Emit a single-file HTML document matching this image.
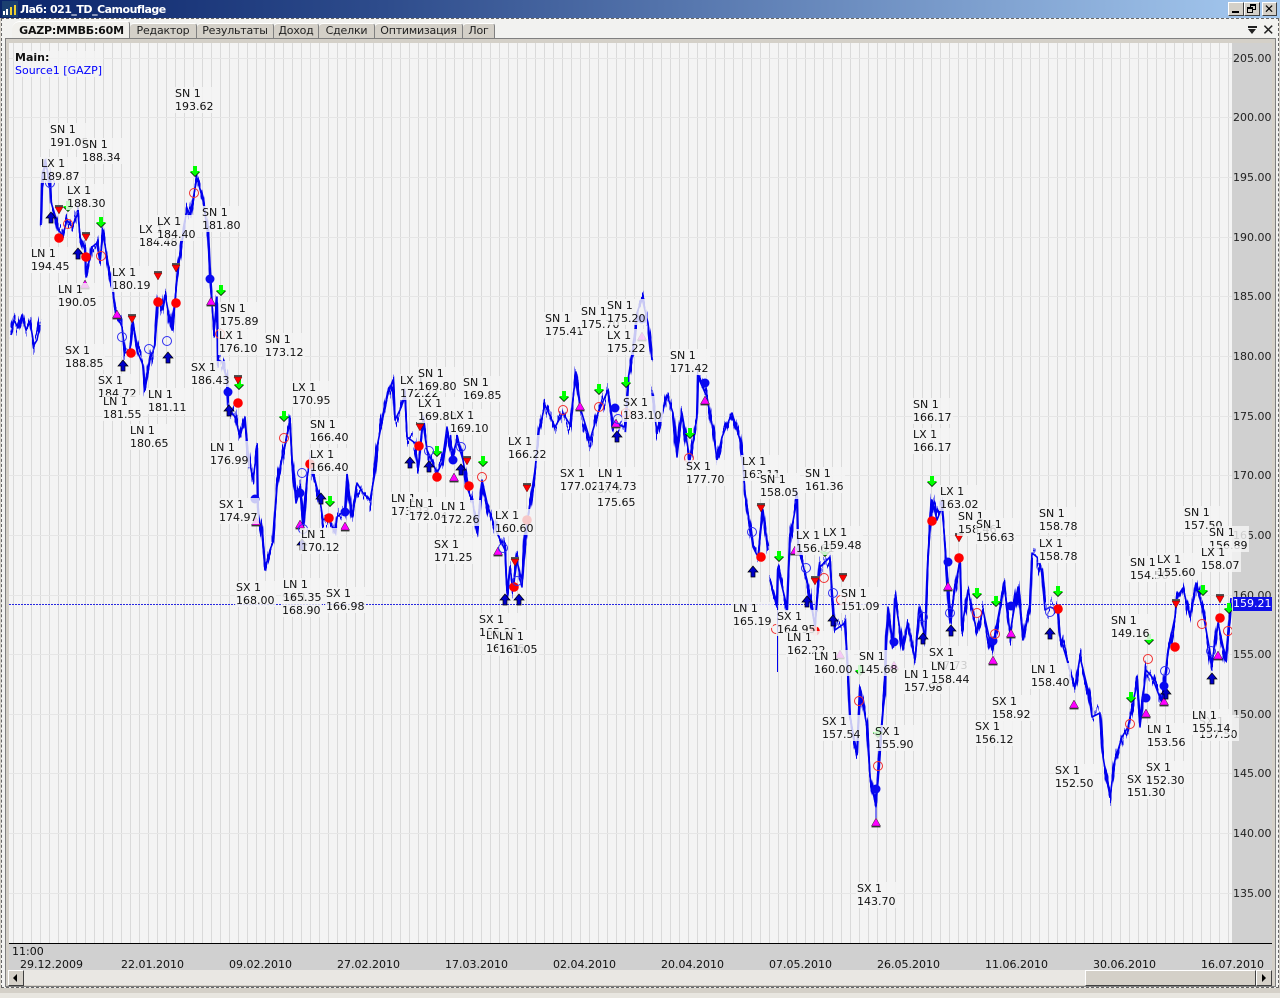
<!DOCTYPE html>
<html><head><meta charset="utf-8"><title>Лаб: 021_TD_Camouflage</title>
<style>
html,body{margin:0;padding:0;width:1280px;height:998px;overflow:hidden;background:#e8e6e0;font:11px/13px "DejaVu Sans","Liberation Sans",sans-serif;color:#111}
div,b,i,span{position:absolute;display:block;font-style:normal}
.l{background:rgba(244,244,244,.82);white-space:nowrap;color:#111;padding:0 1px;margin-left:-1px;transform:translateY(1px)}
.p{left:1233px;color:#222;font-size:11px;white-space:nowrap;transform:translateY(1px)}
.d{top:958px;white-space:nowrap;color:#111}
.t{top:23px;height:14px;background:#d4d0c8;border-top:1px solid #fff;border-right:1px solid #808080;border-bottom:1px solid #808080;text-align:center;line-height:14px;color:#222;border-radius:4px 3px 0 0;white-space:nowrap;letter-spacing:-.2px}
.wb{top:2px;height:14px;background:#d4d0c8;border:1px solid;border-color:#fff #404040 #404040 #fff;box-sizing:border-box}
svg{position:absolute;left:0;top:0}
</style></head><body>

<div style="left:0;top:0;width:1280px;height:18px;background:linear-gradient(90deg,#0a246a 0%,#2e4c8c 30%,#a6caf0 100%)"></div>
<div style="left:2px;top:1px;width:16px;height:16px;background:#1b3f70"></div>
<div style="left:3px;top:11px;width:2px;height:4px;background:#fff"></div>
<div style="left:6px;top:9px;width:2px;height:6px;background:#fff"></div>
<div style="left:10px;top:7px;width:2px;height:8px;background:#f0d030"></div>
<div style="left:14px;top:5px;width:2px;height:10px;background:#f0d030"></div>
<span style="left:20px;top:3px;color:#fff;font:bold 11px/13px 'DejaVu Sans',sans-serif;letter-spacing:-.5px">Лаб: 021_TD_Camouflage</span>
<div class="wb" style="left:1228px;width:16px"></div><div style="left:1232px;top:11px;width:7px;height:2px;background:#000"></div>
<div class="wb" style="left:1244px;width:16px"></div><div style="left:1250px;top:4px;width:6px;height:6px;border:1px solid #000;border-top-width:2px;box-sizing:border-box;"></div><div style="left:1247px;top:7px;width:6px;height:6px;border:1px solid #000;border-top-width:2px;box-sizing:border-box;background:#d4d0c8"></div>
<div class="wb" style="left:1262px;width:15px"></div><span style="left:1264px;top:2px;font:bold 12px/14px 'DejaVu Sans',sans-serif;color:#000">✕</span>

<div style="left:0;top:18px;width:1280px;height:975px;background:#d4d0c8"></div>
<div style="left:1px;top:18px;width:1278px;height:970px;border:1px dashed #666;box-sizing:border-box;background:#f2f2f0"></div>

<div class="t" style="left:12px;top:21px;height:17px;background:#f1f0ec;font-weight:bold;color:#111;line-height:17px;border-radius:8px 3px 0 0;letter-spacing:-.2px;text-indent:2px;width:117px">GAZP:ММВБ:60М</div>
<div class="t" style="left:130px;width:66px">Редактор</div>
<div class="t" style="left:197px;width:76px">Результаты</div>
<div class="t" style="left:274px;width:44px">Доход</div>
<div class="t" style="left:319px;width:55px">Сделки</div>
<div class="t" style="left:375px;width:87px">Оптимизация</div>
<div class="t" style="left:463px;width:31px">Лог</div>

<div style="left:1248px;top:26px;width:9px;height:2px;background:#222"></div>
<div style="left:1248px;top:29px;width:0;height:0;border:4.5px solid transparent;border-top:5px solid #222;border-bottom:0"></div>
<span style="left:1262px;top:22px;font:15px/16px 'DejaVu Sans',sans-serif;color:#222">✕</span>

<div style="left:5px;top:38px;width:1271px;height:949px;border:1px solid #808080;box-sizing:border-box;background:#d4d0c8"></div>
<div style="left:9px;top:43px;width:1263px;height:927px;background:#d0d0d0"></div>

<svg width="1280" height="998" viewBox="0 0 1280 998">
<defs>
<pattern id="vg" x="13" y="0" width="9" height="10" patternUnits="userSpaceOnUse"><rect width="1" height="10" fill="#dadada"/></pattern>
<filter id="n" filterUnits="userSpaceOnUse" x="0" y="0" width="1280" height="998" color-interpolation-filters="sRGB">
<feTurbulence type="fractalNoise" baseFrequency="0.4 0.001" numOctaves="3" seed="4" result="t"/>
<feColorMatrix in="t" type="matrix" values="0 0 0 0 .5  0 1 0 0 0  0 0 0 0 0  0 0 0 0 1" result="m"/>
<feDisplacementMap in="SourceGraphic" in2="m" scale="34" xChannelSelector="R" yChannelSelector="G"/>
</filter>
<g id="pl">
<path d="M11 335L14 320 18 328 22 315 26 330 30 322 34 345 37 340 40 325"/>
<path d="M41 225L42 183 45 160 50 182 51 202 55 215 58 230 63 235 67 220 72 227 78 213 80 237 85 250 86 277 92 247 97 243 100 263 103 233 108 263 113 293 115 310 122 327 125 353 130 350 133 323 138 353 143 365 145 390 150 360 155 345 158 300 162 310 165 295 172 330 178 270 182 240 187 208 190 215 197 178 203 200 208 233 210 279 214 330 217 297 218 360 222 362 227 380 228 407 235 417 240 437 245 417 248 453 253 480 257 450 258 513 262 533 265 570 270 550 273 542 277 487 283 453 290 423 292 460 296 503 300 490 303 527 307 477 310 463 315 480 320 500 323 520 328 517 335 533 337 517 345 510 347 473 352 517 357 483 363 493 370 500 375 473 377 447 383 417 388 393 393 380 395 420 400 410 405 397 407 437 415 443 418 470 423 423 427 450 437 473 442 463 447 427 452 457 457 440 463 460 468 490 473 503 477 533 482 480 488 507 497 533 505 550 507 593 510 567 513 590 517 560 522 587 525 537 530 503 535 470 539 430 545 405 555 427 563 413 570 425 576 372 580 407 590 440 598 413 608 390 613 423 625 427 628 380 633 347 637 313 642 298 648 323 652 360"/>
<path d="M652 393L657 433 667 395 673 413 677 457 682 413 690 460 697 417 698 377 707 397 713 430 717 460 722 437 732 413 740 440 743 467 745 493 753 547 758 557 763 510 768 550"/>
<path d="M770 580L777 607 778 570 787 607 790 537 797 500 798 547 807 580 815 627 820 567 830 557 832 593 835 630 845 623 848 677 850 717 857 753 860 687 867 727 870 777 876 807 880 750 885 687 886 640 888 607 893 647 895 598 903 650 908 623 915 660 920 607 925 640 928 560 932 500 937 520 942 507 945 543 950 623 955 587 960 560 962 627 968 590 977 633 983 610 992 650 1000 607 1004 582 1010 633 1018 587 1023 640 1030 603 1032 553 1037 557 1042 573 1045 610 1050 607 1058 610 1060 637 1065 653 1075 687 1080 657 1088 690 1092 717 1100 713 1103 757 1110 797 1115 760 1122 737 1128 727 1137 683 1140 727 1146 670 1152 677 1162 703 1168 650 1175 617 1177 597 1183 588 1190 617 1196 583 1202 607 1212 663 1218 623 1226 660 1231 598"/>
</g>
<g id="ga"><polygon points="-2,-4 2,-4 2,1 5,1 0,6 -5,1 -2,1" fill="#000"/><polygon points="-2,-5 2,-5 2,0 5,0 0,5 -5,0 -2,0" fill="#0f0"/></g>
<g id="rd"><rect x="-4" y="-5" width="8" height="2" fill="#555"/><polygon points="-4,-3 4,-3 0,4" fill="#f00" stroke="#400" stroke-width=".4"/></g>
<g id="mu"><polygon points="0,-5 -4.5,3 4.5,3" fill="#f0f" stroke="#222" stroke-width=".5"/><rect x="-4.5" y="3" width="9" height="1.4" fill="#333"/></g>
<g id="na"><polygon points="0,-6 -5,0 -2,0 -2,5 2,5 2,0 5,0" fill="#0000c8" stroke="#000" stroke-width=".7"/></g>
<circle id="rf" r="4.8" fill="#f00"/>
<circle id="bf" r="4.5" fill="#0a0af0"/>
<circle id="ro" r="4.5" fill="none" stroke="#f03030" stroke-width="1"/>
<circle id="bo" r="4.5" fill="none" stroke="#3030f0" stroke-width="1"/>
</defs>
<rect x="9" y="43" width="1223" height="900" fill="#f4f4f4"/>
<rect x="9" y="43" width="1223" height="900" fill="url(#vg)"/>
<g stroke="#e6e6e6" stroke-width="1">
<path d="M9 58.5H1232M9 117.5H1232M9 177.5H1232M9 237.5H1232M9 296.5H1232M9 356.5H1232M9 416.5H1232M9 475.5H1232M9 535.5H1232M9 595.5H1232M9 654.5H1232M9 714.5H1232M9 773.5H1232M9 833.5H1232M9 893.5H1232"/>
</g>
<path d="M9 604.5H1232" stroke="#2828e0" stroke-width="1" stroke-dasharray="2 1"/>
<path d="M9 943.5H1272" stroke="#000"/>

<use href="#pl" fill="none" stroke="#0000ee" stroke-width="1.6" stroke-linejoin="round"/>
<g filter="url(#n)"><use href="#pl" fill="none" stroke="#0000ee" stroke-width="2.4" stroke-linejoin="round"/></g>
<path d="M777.5 607V672M876 790V820" stroke="#0000ee" stroke-width="1"/>

<g>
<use href="#ga" x="101" y="222"/><use href="#ga" x="195" y="171"/><use href="#ga" x="221" y="290"/><use href="#ga" x="239" y="384"/><use href="#ga" x="284" y="416"/><use href="#ga" x="330" y="501"/><use href="#ga" x="437" y="451"/><use href="#ga" x="483" y="461"/><use href="#ga" x="564" y="396"/><use href="#ga" x="599" y="389"/><use href="#ga" x="626" y="382"/><use href="#ga" x="690" y="433"/><use href="#ga" x="779" y="556"/><use href="#ga" x="825" y="551"/><use href="#ga" x="932" y="481"/><use href="#ga" x="977" y="593"/><use href="#ga" x="996" y="601"/><use href="#ga" x="1058" y="591"/><use href="#ga" x="1131" y="697"/><use href="#ga" x="1149" y="639"/><use href="#ga" x="1203" y="590"/><use href="#ga" x="1229" y="608"/><use href="#ga" x="68" y="206"/><use href="#ga" x="860" y="670"/><use href="#ga" x="878" y="732"/>
<use href="#rd" x="59" y="210"/><use href="#rd" x="86" y="237"/><use href="#rd" x="132" y="319"/><use href="#rd" x="158" y="276"/><use href="#rd" x="176" y="268"/><use href="#rd" x="238" y="380"/><use href="#rd" x="420" y="427"/><use href="#rd" x="467" y="461"/><use href="#rd" x="527" y="488"/><use href="#rd" x="515" y="562"/><use href="#rd" x="761" y="508"/><use href="#rd" x="815" y="581"/><use href="#rd" x="843" y="578"/><use href="#rd" x="959" y="538"/><use href="#rd" x="1176" y="604"/><use href="#rd" x="1220" y="599"/>
<use href="#mu" x="117" y="315"/><use href="#mu" x="85" y="285"/><use href="#mu" x="211" y="302"/><use href="#mu" x="256" y="522"/><use href="#mu" x="300" y="525"/><use href="#mu" x="345" y="527"/><use href="#mu" x="454" y="478"/><use href="#mu" x="498" y="552"/><use href="#mu" x="580" y="407"/><use href="#mu" x="616" y="424"/><use href="#mu" x="642" y="337"/><use href="#mu" x="705" y="401"/><use href="#mu" x="795" y="551"/><use href="#mu" x="894" y="666"/><use href="#mu" x="876" y="823"/><use href="#mu" x="948" y="587"/><use href="#mu" x="993" y="661"/><use href="#mu" x="1011" y="634"/><use href="#mu" x="1074" y="705"/><use href="#mu" x="1146" y="714"/><use href="#mu" x="1164" y="702"/><use href="#mu" x="1218" y="656"/><use href="#mu" x="840" y="655"/>
<use href="#na" x="51" y="218"/><use href="#na" x="78" y="254"/><use href="#na" x="168" y="358"/><use href="#na" x="123" y="366"/><use href="#na" x="229" y="411"/><use href="#na" x="321" y="499"/><use href="#na" x="410" y="463"/><use href="#na" x="429" y="467"/><use href="#na" x="461" y="470"/><use href="#na" x="505" y="600"/><use href="#na" x="519" y="600"/><use href="#na" x="617" y="437"/><use href="#na" x="753" y="572"/><use href="#na" x="807" y="602"/><use href="#na" x="833" y="621"/><use href="#na" x="923" y="639"/><use href="#na" x="951" y="631"/><use href="#na" x="1050" y="634"/><use href="#na" x="1212" y="679"/><use href="#na" x="1166" y="694"/><use href="#na" x="302" y="545"/>
<use href="#rf" x="59" y="238"/><use href="#rf" x="86" y="257"/><use href="#rf" x="158" y="302"/><use href="#rf" x="176" y="303"/><use href="#rf" x="131" y="353"/><use href="#rf" x="238" y="403"/><use href="#rf" x="310" y="464"/><use href="#rf" x="329" y="518"/><use href="#rf" x="419" y="446"/><use href="#rf" x="437" y="477"/><use href="#rf" x="469" y="486"/><use href="#rf" x="527" y="520"/><use href="#rf" x="514" y="587"/><use href="#rf" x="761" y="557"/><use href="#rf" x="815" y="631"/><use href="#rf" x="932" y="521"/><use href="#rf" x="959" y="558"/><use href="#rf" x="1058" y="609"/><use href="#rf" x="1175" y="647"/><use href="#rf" x="1220" y="618"/>
<use href="#bf" x="210" y="279"/><use href="#bf" x="255" y="499"/><use href="#bf" x="300" y="493"/><use href="#bf" x="345" y="512"/><use href="#bf" x="453" y="460"/><use href="#bf" x="642" y="319"/><use href="#bf" x="705" y="383"/><use href="#bf" x="615" y="408"/><use href="#bf" x="228" y="392"/><use href="#bf" x="948" y="562"/><use href="#bf" x="993" y="641"/><use href="#bf" x="876" y="789"/><use href="#bf" x="1146" y="698"/><use href="#bf" x="1164" y="686"/><use href="#bf" x="894" y="642"/><use href="#bf" x="1011" y="606"/>
<use href="#ro" x="194" y="193"/><use href="#ro" x="68" y="224"/><use href="#ro" x="101" y="256"/><use href="#ro" x="284" y="438"/><use href="#ro" x="482" y="477"/><use href="#ro" x="563" y="410"/><use href="#ro" x="599" y="407"/><use href="#ro" x="689" y="458"/><use href="#ro" x="626" y="413"/><use href="#ro" x="220" y="334"/><use href="#ro" x="859" y="701"/><use href="#ro" x="878" y="766"/><use href="#ro" x="977" y="613"/><use href="#ro" x="995" y="634"/><use href="#ro" x="1148" y="659"/><use href="#ro" x="1130" y="724"/><use href="#ro" x="1202" y="624"/><use href="#ro" x="1228" y="631"/><use href="#ro" x="841" y="600"/><use href="#ro" x="776" y="629"/><use href="#ro" x="824" y="578"/>
<use href="#bo" x="50" y="183"/><use href="#bo" x="122" y="337"/><use href="#bo" x="149" y="349"/><use href="#bo" x="167" y="341"/><use href="#bo" x="503" y="548"/><use href="#bo" x="517" y="581"/><use href="#bo" x="429" y="451"/><use href="#bo" x="461" y="447"/><use href="#bo" x="302" y="473"/><use href="#bo" x="303" y="529"/><use href="#bo" x="618" y="419"/><use href="#bo" x="752" y="532"/><use href="#bo" x="806" y="568"/><use href="#bo" x="833" y="593"/><use href="#bo" x="950" y="613"/><use href="#bo" x="923" y="617"/><use href="#bo" x="1050" y="612"/><use href="#bo" x="1165" y="671"/><use href="#bo" x="1211" y="651"/>
</g>
</svg>

<div style="left:1232px;top:43px;width:40px;height:900px;background:#d0d0d0"></div>
<span class="p" style="top:51px">205.00</span>
<span class="p" style="top:110px">200.00</span>
<span class="p" style="top:170px">195.00</span>
<span class="p" style="top:230px">190.00</span>
<span class="p" style="top:289px">185.00</span>
<span class="p" style="top:349px">180.00</span>
<span class="p" style="top:409px">175.00</span>
<span class="p" style="top:468px">170.00</span>
<span class="p" style="top:528px">165.00</span>
<span class="p" style="top:588px">160.00</span>
<span class="p" style="top:647px">155.00</span>
<span class="p" style="top:707px">150.00</span>
<span class="p" style="top:766px">145.00</span>
<span class="p" style="top:826px">140.00</span>
<span class="p" style="top:886px">135.00</span>
<span class="p" style="top:596px;left:1233px;width:39px;height:14px;background:#1010e8;color:#fff;line-height:14px">159.21</span>

<div class="l" style="left:15px;top:50px;font-weight:bold;background:rgba(244,244,244,.8)">Main:<span style="position:static;font-weight:normal;color:#0000ff">Source1 [GAZP]</span></div>

<i class="l" style="left:175px;top:86px">SN 1<br>193.62</i>
<i class="l" style="left:50px;top:122px">SN 1<br>191.05</i>
<i class="l" style="left:82px;top:137px">SN 1<br>188.34</i>
<i class="l" style="left:41px;top:156px">LX 1<br>189.87</i>
<i class="l" style="left:67px;top:183px">LX 1<br>188.30</i>
<i class="l" style="left:31px;top:246px">LN 1<br>194.45</i>
<i class="l" style="left:58px;top:282px">LN 1<br>190.05</i>
<i class="l" style="left:112px;top:265px">LX 1<br>180.19</i>
<i class="l" style="left:139px;top:222px">LX 1<br>184.48</i>
<i class="l" style="left:157px;top:214px">LX 1<br>184.40</i>
<i class="l" style="left:202px;top:205px">SN 1<br>181.80</i>
<i class="l" style="left:220px;top:301px">SN 1<br>175.89</i>
<i class="l" style="left:219px;top:328px">LX 1<br>176.10</i>
<i class="l" style="left:265px;top:332px">SN 1<br>173.12</i>
<i class="l" style="left:65px;top:343px">SX 1<br>188.85</i>
<i class="l" style="left:98px;top:373px">SX 1<br>184.72</i>
<i class="l" style="left:103px;top:394px">LN 1<br>181.55</i>
<i class="l" style="left:148px;top:387px">LN 1<br>181.11</i>
<i class="l" style="left:130px;top:423px">LN 1<br>180.65</i>
<i class="l" style="left:191px;top:360px">SX 1<br>186.43</i>
<i class="l" style="left:210px;top:440px">LN 1<br>176.99</i>
<i class="l" style="left:219px;top:497px">SX 1<br>174.97</i>
<i class="l" style="left:292px;top:380px">LX 1<br>170.95</i>
<i class="l" style="left:310px;top:417px">SN 1<br>166.40</i>
<i class="l" style="left:310px;top:447px">LX 1<br>166.40</i>
<i class="l" style="left:301px;top:527px">LN 1<br>170.12</i>
<i class="l" style="left:236px;top:580px">SX 1<br>168.00</i>
<i class="l" style="left:282px;top:590px">SX 1<br>168.90</i>
<i class="l" style="left:283px;top:577px">LN 1<br>165.35</i>
<i class="l" style="left:326px;top:586px">SX 1<br>166.98</i>
<i class="l" style="left:400px;top:373px">LX 1<br>172.22</i>
<i class="l" style="left:418px;top:366px">SN 1<br>169.80</i>
<i class="l" style="left:418px;top:396px">LX 1<br>169.80</i>
<i class="l" style="left:450px;top:408px">LX 1<br>169.10</i>
<i class="l" style="left:463px;top:375px">SN 1<br>169.85</i>
<i class="l" style="left:391px;top:491px">LN 1<br>173.23</i>
<i class="l" style="left:409px;top:496px">LN 1<br>172.04</i>
<i class="l" style="left:441px;top:499px">LN 1<br>172.26</i>
<i class="l" style="left:434px;top:537px">SX 1<br>171.25</i>
<i class="l" style="left:508px;top:434px">LX 1<br>166.22</i>
<i class="l" style="left:495px;top:508px">LX 1<br>160.60</i>
<i class="l" style="left:479px;top:612px">SX 1<br>165.90</i>
<i class="l" style="left:486px;top:628px">LN 1<br>161.36</i>
<i class="l" style="left:499px;top:629px">LN 1<br>161.05</i>
<i class="l" style="left:545px;top:311px">SN 1<br>175.41</i>
<i class="l" style="left:581px;top:304px">SN 1<br>175.70</i>
<i class="l" style="left:607px;top:298px">SN 1<br>175.20</i>
<i class="l" style="left:607px;top:328px">LX 1<br>175.22</i>
<i class="l" style="left:623px;top:395px">SX 1<br>183.10</i>
<i class="l" style="left:670px;top:348px">SN 1<br>171.42</i>
<i class="l" style="left:560px;top:466px">SX 1<br>177.02</i>
<i class="l" style="left:597px;top:482px">SX 1<br>175.65</i>
<i class="l" style="left:598px;top:466px">LN 1<br>174.73</i>
<i class="l" style="left:686px;top:459px">SX 1<br>177.70</i>
<i class="l" style="left:742px;top:454px">LX 1<br>163.11</i>
<i class="l" style="left:760px;top:472px">SN 1<br>158.05</i>
<i class="l" style="left:805px;top:466px">SN 1<br>161.36</i>
<i class="l" style="left:796px;top:528px">LX 1<br>156.61</i>
<i class="l" style="left:823px;top:525px">LX 1<br>159.48</i>
<i class="l" style="left:841px;top:586px">SN 1<br>151.09</i>
<i class="l" style="left:733px;top:601px">LN 1<br>165.19</i>
<i class="l" style="left:777px;top:609px">SX 1<br>164.95</i>
<i class="l" style="left:787px;top:630px">LN 1<br>162.22</i>
<i class="l" style="left:814px;top:649px">LN 1<br>160.00</i>
<i class="l" style="left:859px;top:649px">SN 1<br>145.68</i>
<i class="l" style="left:822px;top:714px">SX 1<br>157.54</i>
<i class="l" style="left:875px;top:724px">SX 1<br>155.90</i>
<i class="l" style="left:857px;top:881px">SX 1<br>143.70</i>
<i class="l" style="left:913px;top:397px">SN 1<br>166.17</i>
<i class="l" style="left:913px;top:427px">LX 1<br>166.17</i>
<i class="l" style="left:940px;top:484px">LX 1<br>163.02</i>
<i class="l" style="left:958px;top:509px">SN 1<br>158.46</i>
<i class="l" style="left:976px;top:517px">SN 1<br>156.63</i>
<i class="l" style="left:929px;top:645px">SX 1<br>157.73</i>
<i class="l" style="left:904px;top:667px">LN 1<br>157.98</i>
<i class="l" style="left:931px;top:659px">LN 1<br>158.44</i>
<i class="l" style="left:992px;top:694px">SX 1<br>158.92</i>
<i class="l" style="left:975px;top:719px">SX 1<br>156.12</i>
<i class="l" style="left:1031px;top:662px">LN 1<br>158.40</i>
<i class="l" style="left:1039px;top:506px">SN 1<br>158.78</i>
<i class="l" style="left:1039px;top:536px">LX 1<br>158.78</i>
<i class="l" style="left:1055px;top:763px">SX 1<br>152.50</i>
<i class="l" style="left:1111px;top:613px">SN 1<br>149.16</i>
<i class="l" style="left:1130px;top:555px">SN 1<br>154.50</i>
<i class="l" style="left:1157px;top:552px">LX 1<br>155.60</i>
<i class="l" style="left:1127px;top:772px">SX 1<br>151.30</i>
<i class="l" style="left:1146px;top:760px">SX 1<br>152.30</i>
<i class="l" style="left:1147px;top:722px">LN 1<br>153.56</i>
<i class="l" style="left:1199px;top:714px">SX 1<br>157.50</i>
<i class="l" style="left:1192px;top:708px">LN 1<br>155.14</i>
<i class="l" style="left:1184px;top:505px">SN 1<br>157.50</i>
<i class="l" style="left:1209px;top:525px">SN 1<br>156.89</i>
<i class="l" style="left:1201px;top:545px">LX 1<br>158.07</i>

<span class="d" style="left:12px;top:945px">11:00</span>
<span class="d" style="left:20px">29.12.2009</span>
<span class="d" style="left:121px">22.01.2010</span>
<span class="d" style="left:229px">09.02.2010</span>
<span class="d" style="left:337px">27.02.2010</span>
<span class="d" style="left:445px">17.03.2010</span>
<span class="d" style="left:553px">02.04.2010</span>
<span class="d" style="left:661px">20.04.2010</span>
<span class="d" style="left:769px">07.05.2010</span>
<span class="d" style="left:877px">26.05.2010</span>
<span class="d" style="left:985px">11.06.2010</span>
<span class="d" style="left:1093px">30.06.2010</span>
<span class="d" style="left:1201px">16.07.2010</span>

<div style="left:8px;top:970px;width:1264px;height:15px;background:#e9e7e3"></div>
<div style="left:8px;top:970px;width:16px;height:16px;background:#d4d0c8;border:1px solid;border-color:#fff #404040 #404040 #fff;box-sizing:border-box"></div>
<div style="left:13px;top:974px;width:0;height:0;border:4px solid transparent;border-right:4px solid #000;border-left:0"></div>
<div style="left:1085px;top:970px;width:171px;height:16px;background:#d4d0c8;border:1px solid;border-color:#fff #404040 #404040 #fff;box-sizing:border-box"></div>
<div style="left:1256px;top:970px;width:16px;height:16px;background:#d4d0c8;border:1px solid;border-color:#fff #404040 #404040 #fff;box-sizing:border-box"></div>
<div style="left:1262px;top:974px;width:0;height:0;border:4px solid transparent;border-left:4px solid #000;border-right:0"></div>
</body></html>
